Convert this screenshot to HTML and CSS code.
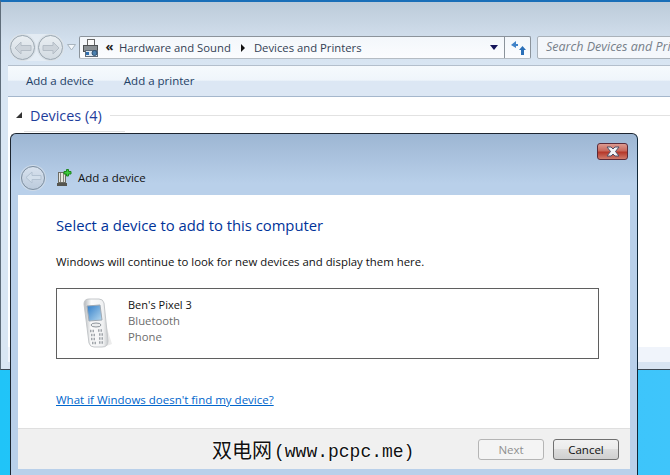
FILE: index.html
```html
<!DOCTYPE html>
<html lang="en">
<head>
    <meta charset="UTF-8">
    <title>Add a device</title>
    <link rel="stylesheet" href="styles.css">
</head>
<body>
    <div class="explorer">
        <div class="nav-bar">
            <div class="nav-buttons">
                <div class="nav-pair">
                    <span class="round-btn"><svg width="18" height="14" viewBox="0 0 18 14"><path d="M1 7l6-6v3.500h10v5H7V13z" fill="#ccd3da" stroke="#b4bdc6"/></svg></span>
                    <span class="round-btn"><svg width="18" height="14" viewBox="0 0 18 14"><path d="M17 7l-6-6v3.500H1v5h10V13z" fill="#ccd3da" stroke="#b4bdc6"/></svg></span>
                </div>
                <svg class="nav-drop" width="9" height="7" viewBox="0 0 9 7"><path d="M.5.5h8L4.500 6z" fill="#f2f6fa" stroke="#a9b4be"/></svg>
            </div>
            <div class="address">
                <svg class="printer" width="18" height="20" viewBox="0 0 18 20">
                    <rect x="5.500" y="1.500" width="7" height="6" fill="#fafafa" stroke="#666"/>
                    <rect x="1.500" y="7.500" width="14" height="6" fill="#8a9094" stroke="#4d5154"/>
                    <rect x="3.500" y="12.500" width="12" height="6" fill="#dfe9f2" stroke="#5d6a78"/>
                    <rect x="4" y="14" width="3" height="3" fill="#2f6fb0"/>
                    <circle cx="12.500" cy="15" r="2.500" fill="#4a7fae" stroke="#2d4f70"/>
                </svg>
                <span class="chevrons">«</span>
                <span class="crumb">Hardware and Sound</span>
                <span class="crumb-arrow"></span>
                <span class="crumb">Devices and Printers</span>
                <span class="address-drop"></span>
                <span class="refresh">
                    <svg width="16" height="16" viewBox="0 0 16 16">
                        <path d="M6 1L1 5l5 3V6h2V4H6z" fill="#3f82c8"/>
                        <path d="M11 15v-5H9l3.500-4L16 10h-2v5z" fill="#2b70b8"/>
                    </svg>
                </span>
            </div>
            <div class="search">Search Devices and Printers</div>
        </div>
        <div class="toolbar">
            <span>Add a device</span>
            <span>Add a printer</span>
        </div>
        <div class="content">
            <div class="group-head">
                <span class="group-arrow"></span>
                <span class="group-title">Devices (4)</span>
                <span class="group-line"></span>
            </div>
            <div class="group-under"></div>
        </div>
        <div class="details"></div>
    </div>

    <div class="dialog">
        <div class="dialog-top">
            <span class="close"><svg width="16" height="11" viewBox="0 0 16 11"><path d="M2 1h4l2 2 2-2h4l-3.500 4.500L14 10h-4L8 8l-2 2H2l3.500-4.500z" fill="#f4f4f6" stroke="#4c5068"/></svg></span>
        </div>
        <div class="dialog-title">
            <span class="back-btn"><svg width="17" height="13" viewBox="0 0 17 13"><path d="M1 6.500L7 1v3.500h9v4H7V12z" fill="#d3dfeb" stroke="#b3c2d2"/></svg></span>
            <svg class="title-icon" width="15" height="17" viewBox="0 0 15 17">
                <rect x="1.500" y="3.500" width="7" height="10" fill="#e6e6e2" stroke="#6c6c64"/>
                <path d="M3.500 4v9M6.500 4v9" stroke="#85857c"/>
                <rect x="0" y="14" width="10" height="3" fill="#55554f"/>
                <path d="M9.500.5h2v2h2.500v2.500h-2.500v2h-2V5H7V2.500h2.500z" fill="#3ccb3c" stroke="#1c861c"/>
            </svg>
            <span>Add a device</span>
        </div>
        <div class="panel">
            <div class="panel-body">
                <h1>Select a device to add to this computer</h1>
                <p>Windows will continue to look for new devices and display them here.</p>
                <div class="device-box">
                    <svg class="phone" width="32" height="52" viewBox="0 0 32 52">
                        <defs>
                            <linearGradient id="screen" x1="0" y1="0" x2="1" y2="1">
                                <stop offset="0" stop-color="#2f7cc8"/>
                                <stop offset="1" stop-color="#b8daf0"/>
                            </linearGradient>
                            <linearGradient id="shell" x1="0" y1="0" x2="1" y2="0">
                                <stop offset="0" stop-color="#b4b8bb"/>
                                <stop offset="0.3" stop-color="#fbfbfb"/>
                                <stop offset="0.8" stop-color="#f0f1f2"/>
                                <stop offset="1" stop-color="#c6c9cb"/>
                            </linearGradient>
                        </defs>
                        <path d="M24 24l7 22-8 3z" fill="#ececec"/>
                        <path d="M3 6Q3 1 8 1h10Q22 1 23 5l4 38q0 6-6 6h-8q-4 0-5-4z" fill="url(#shell)" stroke="#c4c7ca"/>
                        <path d="M6 8l13-1 2 15-13 1z" fill="url(#screen)" stroke="#a0aab4"/>
                        <ellipse cx="15" cy="27" rx="5" ry="2" fill="#eceeef" stroke="#8f959b"/>
                        <path d="M9 33h4M17 32.500h5M10 37h4M18 36.500h4M10 41h4M18 40.500h5M11 45h4M18 44.500h5" stroke="#a0a5aa" stroke-width="2.500" stroke-dasharray="1.500 1"/>
                    </svg>
                    <div class="device-info">
                        <div class="device-name">Ben's Pixel 3</div>
                        <div class="device-meta">Bluetooth</div>
                        <div class="device-meta">Phone</div>
                    </div>
                </div>
                <a class="help-link" href="#">What if Windows doesn't find my device?</a>
            </div>
            <div class="panel-footer">
                <span class="watermark">双电网<span class="watermark-latin">(www.pcpc.me)</span></span>
                <button class="btn btn-off" disabled>Next</button>
                <button class="btn">Cancel</button>
            </div>
        </div>
    </div>
</body>
</html>
```

FILE: styles.css
```css
html, body {
    margin: 0;
    height: 100%;
}

body {
    width: 670px;
    height: 475px;
    overflow: hidden;
    position: relative;
    font-family: "Open Sans", "Noto Sans", sans-serif;
    font-size: 11.5px;
    background: linear-gradient(90deg, #20c4f8, #3fc5fb);
}

.explorer {
    height: 370px;
    border-top: 2px solid #1a6fb8;
    border-bottom: 1px solid #3c4650;
    border-left: 1px solid #5f6d7a;
    box-sizing: border-box;
    padding-left: 7px;
    background: linear-gradient(#bccbd9 0, #d3e0ee 40px, #d9e6f3 65px, #d9e6f3 100%);
    overflow: hidden;
    display: flex;
    flex-direction: column;
}

.nav-bar {
    height: 63px;
    flex: none;
    display: flex;
    align-items: flex-end;
    padding-left: 1px;
    padding-bottom: 6px;
    box-sizing: border-box;
}

.nav-buttons {
    display: flex;
    align-items: center;
    width: 70px;
    height: 23px;
    flex: none;
}

.nav-pair {
    display: flex;
    gap: 1px;
    border-radius: 14px;
    background: rgba(235, 241, 246, 0.7);
}

.round-btn {
    width: 23px;
    height: 23px;
    border-radius: 50%;
    border: 1px solid #98a4ae;
    box-shadow: 0 0 0 1px #d9e0e6;
    background: linear-gradient(#e9eef2, #d3dbe2);
    display: flex;
    align-items: center;
    justify-content: center;
    margin: 1px;
}

.nav-drop {
    margin-left: 3px;
}

.address {
    width: 450px;
    height: 21px;
    flex: none;
    border: 1px solid #8b939b;
    border-bottom-color: #b5bcc3;
    border-radius: 2px;
    background: linear-gradient(#f3f7fb, #fbfcfe);
    display: flex;
    align-items: center;
    color: #333f55;
}

.printer {
    margin-left: 2px;
    flex: none;
}

.chevrons {
    width: 19px;
    text-align: center;
    margin-top: -3px;
    font-size: 13px;
    font-weight: 700;
    color: #222;
}

.crumb {
    white-space: nowrap;
    font-size: 11.3px;
}

.crumb-arrow {
    border: 4px solid transparent;
    border-left: 4px solid #111;
    border-right: 0;
    margin: 0 9px 0 10px;
}

.address-drop {
    margin-left: auto;
    margin-right: 6px;
    border: 4px solid transparent;
    border-top: 5px solid #14145a;
    border-bottom: 0;
}

.refresh {
    width: 25px;
    height: 21px;
    border-left: 1px solid #8b939b;
    display: flex;
    align-items: center;
    justify-content: center;
}

.search {
    flex: none;
    width: 140px;
    height: 21px;
    margin-left: 6px;
    border: 1px solid #aab2ba;
    border-radius: 2px;
    background: #f4f7fb;
    color: #77808a;
    font-size: 12.5px;
    font-style: italic;
    line-height: 20px;
    padding-left: 8px;
    white-space: nowrap;
}

.toolbar {
    height: 29px;
    padding-bottom: 1px;
    flex: none;
    display: flex;
    align-items: center;
    gap: 30px;
    padding-left: 18px;
    border-top: 1px solid #b3bfcc;
    border-bottom: 1px solid #a5b7cc;
    background: linear-gradient(#f6fafd 0, #eff5fb 48%, #dce7f4 49%, #dce7f4 100%);
    color: #1e3f66;
}

.content {
    flex: 1;
    background: #fff;
}

.group-head {
    display: flex;
    align-items: center;
    height: 36px;
    padding-left: 8px;
}

.group-arrow {
    border-style: solid;
    border-width: 0 0 6px 6px;
    border-color: transparent transparent #333 transparent;
}

.group-title {
    margin-left: 8px;
    font-size: 14.4px;
    color: #1e3d9b;
}

.group-line {
    flex: 1;
    margin-left: 8px;
    border-top: 1px solid #e2e2e2;
}

.group-under {
    width: 101px;
    margin: -2px 0 0 16px;
    border-top: 1px solid #e2e2e2;
}

.details {
    height: 22px;
    flex: none;
    background: linear-gradient(#f0f4fb 0, #f0f4fb 68%, #d8e4f2 68%, #d8e4f2 100%);
}

.dialog {
    position: absolute;
    left: 10px;
    top: 133px;
    width: 628px;
    height: 342px;
    box-sizing: border-box;
    border: 1px solid #1c2530;
    border-right-color: #10283a;
    border-bottom: 0;
    border-radius: 6px 6px 0 0;
    background: linear-gradient(#9db6d3 0, #b9d0ea 50px, #b9d0ea 100%);
    padding: 0 7px 6px;
    display: flex;
    flex-direction: column;
}

.dialog-top {
    height: 26px;
    flex: none;
    display: flex;
    justify-content: flex-end;
    align-items: flex-end;
    margin-right: 2px;
}

.close {
    width: 29px;
    height: 15px;
    border: 1px solid #5b2a38;
    border-radius: 3px;
    background: linear-gradient(#dd9a90 0, #c8695c 45%, #b5382a 55%, #cf7a6a 100%);
    display: flex;
    align-items: center;
    justify-content: center;
}

.dialog-title {
    height: 35px;
    flex: none;
    display: flex;
    align-items: center;
    color: #111;
    margin-left: 3px;
}

.back-btn {
    width: 22px;
    height: 22px;
    border-radius: 50%;
    border: 1px solid #7f8f9f;
    box-shadow: 0 0 0 1px #cfdbe8;
    background: linear-gradient(#d8e2ee, #bccbdc);
    display: flex;
    align-items: center;
    justify-content: center;
    margin-right: 12px;
}

.title-icon {
    margin-right: 6px;
}

.panel {
    flex: 1;
    display: flex;
    flex-direction: column;
    background: #fff;
}

.panel-body {
    flex: 1;
    padding: 20px 31px 0 38px;
}

h1 {
    margin: 0;
    font-size: 14.8px;
    font-weight: 400;
    color: #003399;
}

p {
    margin: 19px 0 0;
    color: #111;
    font-size: 11.4px;
}

.device-box {
    margin-top: 19px;
    height: 69px;
    border: 1px solid #5f5f5f;
    display: flex;
    align-items: center;
    padding-left: 24px;
}

.phone {
    margin-right: 15px;
}

.device-info {
    font-size: 11.3px;
    padding-bottom: 6px;
}

.device-name {
    color: #111;
    font-size: 11px;
    line-height: 16px;
}

.device-meta {
    color: #6d6d6d;
    line-height: 16px;
}

.help-link {
    display: block;
    margin-top: 33px;
    color: #0066cc;
}

.panel-footer {
    position: relative;
    height: 40px;
    flex: none;
    display: flex;
    justify-content: flex-end;
    align-items: center;
    gap: 9px;
    padding-right: 11px;
    border-top: 1px solid #dfdfdf;
    background: #f0f0f0;
}

.watermark {
    position: absolute;
    left: 194px;
    top: 6px;
    font-family: "Noto Sans CJK SC", sans-serif;
    font-size: 20px;
    color: #111;
    text-shadow: 0 0 2px #fff, 0 0 2px #fff;
    white-space: nowrap;
}

.watermark-latin {
    margin-left: 2px;
    font-family: "Liberation Mono", monospace;
    font-size: 18px;
    vertical-align: 1px;
}

.btn {
    width: 66px;
    height: 21px;
    padding: 0;
    border: 1px solid #707070;
    border-radius: 3px;
    background: linear-gradient(#f2f2f2 0, #ebebeb 48%, #dddddd 50%, #cfcfcf 100%);
    font-family: inherit;
    font-size: 11.5px;
    color: #111;
}

.btn-off {
    border-color: #b5b5b5;
    background: #f4f4f4;
    color: #8f8f8f;
}
```
